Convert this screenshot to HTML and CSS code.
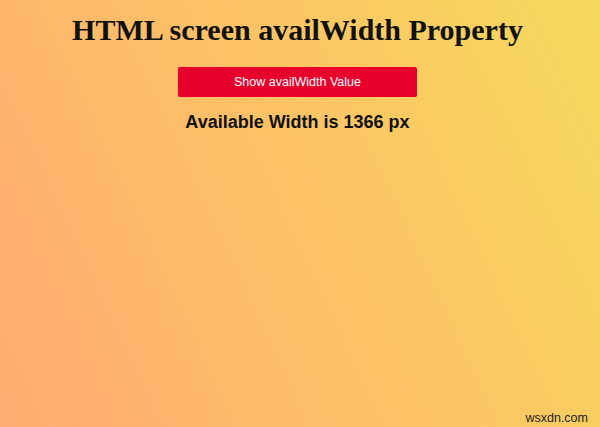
FILE: index.html
```html
<!DOCTYPE html>
<html>
<head>
<meta charset="utf-8">
<link rel="stylesheet" href="styles.css">
</head>
<body>
<main class="page">
  <h1 class="title">HTML screen availWidth Property</h1>
  <button class="show-btn">Show availWidth Value</button>
  <p class="result">Available Width is 1366 px</p>
  <div class="spacer"></div>
  <footer class="mark">wsxdn.com</footer>
</main>
</body>
</html>
```
FILE: styles.css
```css
html, body {
  margin: 0;
  padding: 0;
  height: 100%;
}
body {
  background: linear-gradient(65deg, #ffac72 0%, #fdc166 50%, #f5da5c 100%);
  font-family: "Liberation Sans", Arial, sans-serif;
  overflow: hidden;
}
.page {
  height: 427px;
  display: flex;
  flex-direction: column;
  align-items: center;
  box-sizing: border-box;
  padding: 12px 5px 0 0;
}
.title {
  margin: 0;
  font-family: "Liberation Serif", "Times New Roman", serif;
  font-weight: bold;
  font-size: 30px;
  line-height: 36px;
  color: #111;
}
.show-btn {
  margin-top: 19px;
  width: 239px;
  height: 30px;
  background: #e8002c;
  color: #fff;
  border: none;
  border-radius: 2px;
  font-family: "Liberation Sans", Arial, sans-serif;
  font-size: 12.5px;
  padding: 0;
}
.result {
  margin: 14px 0 0;
  font-size: 18px;
  font-weight: bold;
  line-height: 22px;
  color: #111;
}
.spacer { flex: 1; }
.mark {
  align-self: flex-end;
  margin: 0 7px 2px 0;
  font-size: 12.5px;
  color: #222;
}
```
